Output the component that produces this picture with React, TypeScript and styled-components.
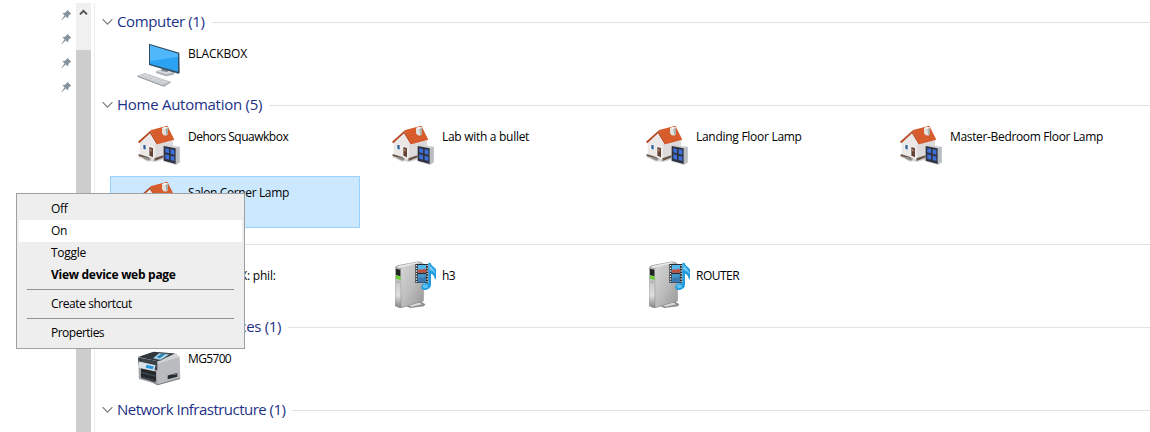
import React from "react";
import styled, { createGlobalStyle } from "styled-components";

const GlobalStyle = createGlobalStyle`
  * { box-sizing: border-box; }
  body {
    margin: 0;
    background: #fff;
    color: #000;
    font: 12px/16px "Open Sans", "Noto Sans", sans-serif;
    overflow: hidden;
  }
  svg { display: block; flex: none; }
`;

const Window = styled.div`
  position: relative;
  display: flex;
  width: 1150px;
  height: 432px;
  overflow: hidden;
`;

const NavPane = styled.aside`
  width: 76px;
  flex: none;
  padding: 3px 4px 0 0;
  display: flex;
  flex-direction: column;
  align-items: flex-end;
`;

const PinSlot = styled.div`
  height: 24px;
  display: flex;
  align-items: center;
`;

const ScrollBar = styled.div`
  width: 15px;
  flex: none;
  margin: 3px 3px 0 0;
  display: flex;
  flex-direction: column;
  background: #f0f0f0;
`;

const ScrollUp = styled.div`
  height: 47px;
  display: flex;
  justify-content: center;
  padding-top: 6px;
`;

const Thumb = styled.div`
  flex: 1;
  background: #cdcdcd;
`;

const Content = styled.main`
  flex: 1;
  margin-top: 3px;
  padding-top: 4px;
  border-left: 1px solid #ececec;
  display: flex;
  flex-direction: column;
  gap: 1px;
`;

const GroupHeader = styled.header`
  height: 30px;
  padding-left: 7px;
  display: flex;
  align-items: center;
`;

const GroupTitle = styled.h2<{ $spacing: number }>`
  margin: 0 7px 2px 4px;
  font-size: 15px;
  line-height: 20px;
  font-weight: 400;
  color: #1e3287;
  white-space: nowrap;
  letter-spacing: ${(p) => p.$spacing}px;
`;

const Rule = styled.div`
  flex: 1;
  height: 1px;
  background: #e2e2e2;
`;

const Tiles = styled.div`
  padding-left: 15px;
  display: grid;
  grid-template-columns: repeat(4, 250px);
  grid-auto-rows: 52px;
  gap: 4px;
`;

const Tile = styled.div<{ $selected?: boolean }>`
  display: flex;
  padding: 1px 0 0 23px;
  border: 1px solid ${(p) => (p.$selected ? "#99d1ff" : "transparent")};
  background: ${(p) => (p.$selected ? "#cce8ff" : "transparent")};
`;

const TileLabel = styled.span<{ $spacing: number }>`
  margin: 7px 0 0 6px;
  white-space: nowrap;
  letter-spacing: ${(p) => p.$spacing}px;
`;

const Menu = styled.div`
  position: absolute;
  left: 16px;
  top: 193px;
  width: 229px;
  height: 156px;
  padding: 4px 2px;
  border: 1px solid #a0a0a0;
  background: #eee;
`;

const MenuItem = styled.div<{ $hover?: boolean; $bold?: boolean; $spacing: number }>`
  height: 22px;
  padding-left: 32px;
  line-height: 22px;
  background: ${(p) => (p.$hover ? "#fff" : "transparent")};
  font-weight: ${(p) => (p.$bold ? 700 : 400)};
  letter-spacing: ${(p) => p.$spacing}px;
`;

const Separator = styled.div`
  height: 1px;
  margin: 3px 8px;
  background: #919191;
`;

const Pin = () => (
  <svg width="11" height="12" viewBox="0 0 11 12">
    <path d="M6.3.8 10.3 4.8 9 5.500 7.400 7.100 7.200 9.600 4.600 7.400 1 11 .4 10.700 3.600 6.400 1.400 4.100 4 3.800 5.600 2.200Z" fill="#85949e" />
  </svg>
);

const Chevron = () => (
  <svg width="11" height="8" viewBox="0 0 11 8">
    <path d="M.6 1.2 5.5 6.1 10.4 1.2" fill="none" stroke="#777" strokeWidth="1.1" />
  </svg>
);

const ComputerIcon = () => (
  <svg width="48" height="48" viewBox="12 9 144 144">
    <path d="M78 106 100 100 133 109 131 116 108 121 78 111Z" fill="#aab0b5" />
    <path d="M80 106 102 101 130 109 109 115Z" fill="#d9dde0" />
    <path d="M95 96 114 101 113 109 94 105Z" fill="#838b92" />
    <path d="M57 23 148 50 149 111 145 113 57 87Z" fill="#334e62" />
    <path d="M60 28 144 53 144 107 60 84Z" fill="#2ba2f2" />
    <path d="M60 28 144 53 144 62 60 76Z" fill="#50b7fa" />
    <path d="M22 119 45 111 123 137 102 149Z" fill="#b9bec2" />
    <path d="M22 119 102 149 123 137 123 139 102 152 22 122Z" fill="#858c92" />
    <path d="m30 118 71 27M36 116l72 26M42 114l72 25M36 123l21-8M49 128l21-8M62 133l21-8M75 138l21-8M88 143l21-8" stroke="#e6e8ea" strokeWidth="1.800" />
  </svg>
);

const HouseIcon = () => (
  <svg width="48" height="48" viewBox="12 12 144 144">
    <path d="M26 111 42 106 106 112 104 124 73 132 60 128 55 132 40 124 25 117Z" fill="#d5d3cf" />
    <path d="M29 70 60 43 84 80 76 127 29 110Z" fill="#ebe8e7" />
    <path d="M76 78 129 67 129 98 103 112 76 126Z" fill="#dcdada" />
    <path d="M26 108 57 118v6L26 114ZM73 121l29-10v7l-28 11Z" fill="#6a564b" />
    <path d="M61 38 24 71 28 76 60 46 80 79 84 77Z" fill="#b54a20" />
    <path d="M61 37 112 23 133 65 82 79Z" fill="#d65a2a" />
    <path d="m65 43 50-14M70 51l48-13M74 59l48-13M79 68l49-13" stroke="#dc6334" strokeWidth="2" />
    <path d="M96 31 102 27 114 28v19l-5 6-9-2-4-6Z" fill="#e2e2e0" />
    <path d="M106 32 114 28v19l-5 6Z" fill="#adb0ac" />
    <path d="M96 31 104 27 114 28 106 33Z" fill="#f5f5f5" />
    <path d="M38 78 49 81V97L38 94Z" fill="#fff" />
    <path d="M40 80 47 82V95L40 92Z" fill="#295f96" />
    <path d="M56 85 70 88V119L56 114Z" fill="#fff" />
    <path d="M58 87 69 90V118L58 113Z" fill="#654236" />
    <path d="M60 93 65 94V101L60 99Z" fill="#a8806c" />
    <path d="M41 116 63 121 58 128 41 122Z" fill="#908e8b" />
    <path d="M100 83 108 79 149 86 149 133 137 141 100 130Z" fill="#d3d5d8" />
    <path d="M137 90 149 86V133L137 141Z" fill="#b9bcc1" />
    <path d="M101 84 137 91V138L101 128Z" fill="#30333f" />
    <path d="M106 91 117 93V106L106 103ZM122 94 133 96V110L122 107ZM106 109 117 112V125L106 122ZM122 113 133 116V129L122 126Z" fill="#3d70da" />
  </svg>
);

const MediaServerIcon = () => (
  <svg width="48" height="48" viewBox="9 18 144 144">
    <defs>
      <linearGradient id="case" x1="0" y1="0" x2="1" y2="1">
        <stop offset="0" stopColor="#d6d6d6" />
        <stop offset=".5" stopColor="#bdbdbd" />
        <stop offset="1" stopColor="#979797" />
      </linearGradient>
      <linearGradient id="front" x1="0" y1="0" x2="0" y2="1">
        <stop offset="0" stopColor="#b5b5b5" />
        <stop offset=".7" stopColor="#dedede" />
        <stop offset="1" stopColor="#858585" />
      </linearGradient>
    </defs>
    <path d="M58 151 104 137 121 148 117 154 76 159Z" fill="#8b8b8b" />
    <path d="M70 151 101 142 112 148 80 155Z" fill="#dadada" />
    <path d="M30 40Q30 34 38 31L94 20Q110 18 116 28L116 139 52 158Q44 162 30 153Z" fill="#929292" />
    <path d="M48 43Q48 39 54 37L104 24Q113 23 115 30L115 137 49 157Z" fill="url(#case)" />
    <path d="M33 36 40 32 96 21 107 23 50 38 46 40Z" fill="#e6e6e6" />
    <path d="M31 37 47 41V158L31 151Z" fill="url(#front)" />
    <path d="M33 41 46 44V64L33 60Z" fill="#202621" />
    <path d="M33 61 47 65V75L33 71Z" fill="#67ce2e" />
    <path d="M35 77 44 79M35 82 44 84" stroke="#999" strokeWidth="2" />
    <path d="M91 27H130V84H91Z" fill="#292c30" />
    <path d="M98 30H123V53H98Z" fill="#54b6e9" />
    <path d="M98 57H123V82H98Z" fill="#4597ca" />
    <path d="M98 46 107 42 112 45 118 40 123 45V53H98Z" fill="#c05244" />
    <path d="m98 74 9-8 6 4 10-8v20H98Z" fill="#3d7ab0" />
    <path d="M94.500 30V82M126.500 30V82" stroke="#eee" strokeWidth="3.500" strokeDasharray="4 4" />
    <path d="M130 23 137 24C138 32 148 36 153 43 160 52 158 63 150 75 149 64 145 58 138 56V88C138 98 131 104 122 105 112 106 107 101 109 94 111 86 120 82 130 85Z" fill="#229ce0" />
    <path d="M132 28C137 39 151 42 151 58 147 49 141 46 134 45Z" fill="#77cef8" />
    <ellipse cx="121" cy="94" rx="8" ry="6" fill="#5fc2f3" />
  </svg>
);

const PrinterIcon = () => (
  <svg width="48" height="48" viewBox="12 12 144 144">
    <g transform="translate(0 10) scale(1 .93)">
      <path d="M25 106 42 99 85 124 150 109 150 115 83 135Z" fill="#777c80" />
      <path d="M24 47 82 61 84 132 27 115Z" fill="#a0a4a8" />
      <path d="M80 62 149 43 151 111 83 132Z" fill="#b9bbbe" />
      <path d="M24 45 68 28 138 32 149 43 82 66Z" fill="#d2d4d6" />
      <path d="M24 44 71 27 135 33 85 58Z" fill="#30363b" />
      <path d="M67 49 87 31 122 34 93 56Z" fill="#61727c" />
      <path d="M71 47 87 33 117 36 91 53Z" fill="#a9d8ee" />
      <path d="m80 44 16-11 11 1-18 14Z" fill="#287fab" />
      <path d="M24 46 82 57 82 87 27 74Z" fill="#3b4247" />
      <path d="M27 59 77 71 72 89 24 78Z" fill="#d9e2e8" />
      <path d="M50 69 72 75 68 84 47 79Z" fill="#2696df" />
      <path d="M33 81 78 92V121L33 108Z" fill="#23282c" />
      <path d="M34 92 78 104V108L34 96Z" fill="#454d53" />
      <path d="M33 107 79 119 76 126 33 112Z" fill="#3a4146" />
      <path d="M113 104 142 96 142 108 113 116Z" fill="#262b30" />
      <path d="M113 104 126 100 132 103 142 100V96L113 104Z" fill="#646a6f" />
    </g>
  </svg>
);

type Device = { name: string; spacing: number; selected?: boolean; icon: React.FC };
type Group = { title: string; spacing: number; devices: Device[] };

const groups: Group[] = [
  { title: "Computer (1)", spacing: -0.36, devices: [{ name: "BLACKBOX", spacing: -0.2, icon: ComputerIcon }] },
  {
    title: "Home Automation (5)",
    spacing: -0.27,
    devices: [
      { name: "Dehors Squawkbox", spacing: -0.5, icon: HouseIcon },
      { name: "Lab with a bullet", spacing: -0.29, icon: HouseIcon },
      { name: "Landing Floor Lamp", spacing: -0.28, icon: HouseIcon },
      { name: "Master-Bedroom Floor Lamp", spacing: -0.34, icon: HouseIcon },
      { name: "Salon Corner Lamp", spacing: -0.37, selected: true, icon: HouseIcon },
    ],
  },
  {
    title: "Multimedia (3)",
    spacing: -0.3,
    devices: [
      { name: "BLACKBOX: phil:", spacing: -0.2, icon: MediaServerIcon },
      { name: "h3", spacing: -0.5, icon: MediaServerIcon },
      { name: "ROUTER", spacing: -0.5, icon: MediaServerIcon },
    ],
  },
  { title: "Multifunction Devices (1)", spacing: -0.32, devices: [{ name: "MG5700", spacing: -0.65, icon: PrinterIcon }] },
  { title: "Network Infrastructure (1)", spacing: -0.52, devices: [] },
];

export default function App() {
  return (
    <>
      <GlobalStyle />
      <Window>
        <NavPane>
          {[0, 1, 2, 3].map((i) => (
            <PinSlot key={i}><Pin /></PinSlot>
          ))}
        </NavPane>
        <ScrollBar>
          <ScrollUp>
            <svg width="9" height="7" viewBox="0 0 9 7">
              <path d="M1 5.300 4.500 1.800 8 5.300" fill="none" stroke="#505050" strokeWidth="1.900" />
            </svg>
          </ScrollUp>
          <Thumb />
        </ScrollBar>
        <Content>
          {groups.map((group) => (
            <section key={group.title}>
              <GroupHeader>
                <Chevron />
                <GroupTitle $spacing={group.spacing}>{group.title}</GroupTitle>
                <Rule />
              </GroupHeader>
              <Tiles>
                {group.devices.map(({ name, spacing, selected, icon: Icon }) => (
                  <Tile key={name} $selected={selected}>
                    <Icon />
                    <TileLabel $spacing={spacing}>{name}</TileLabel>
                  </Tile>
                ))}
              </Tiles>
            </section>
          ))}
        </Content>
        <Menu>
          <MenuItem $spacing={-0.3}>Off</MenuItem>
          <MenuItem $spacing={-0.4} $hover>On</MenuItem>
          <MenuItem $spacing={-0.3}>Toggle</MenuItem>
          <MenuItem $spacing={-0.28} $bold>View device web page</MenuItem>
          <Separator />
          <MenuItem $spacing={-0.4}>Create shortcut</MenuItem>
          <Separator />
          <MenuItem $spacing={-0.5}>Properties</MenuItem>
        </Menu>
      </Window>
    </>
  );
}
